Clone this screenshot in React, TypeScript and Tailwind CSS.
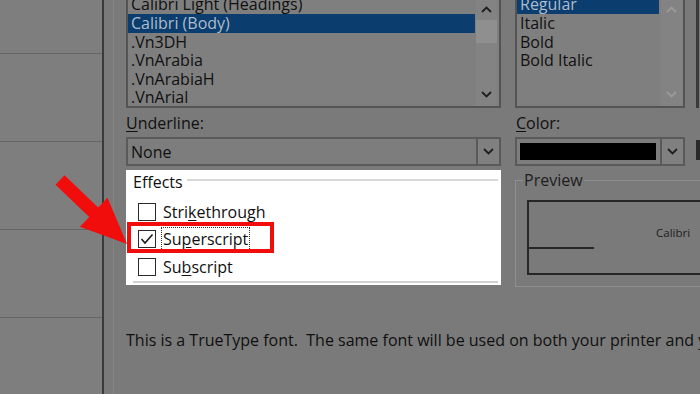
import React from 'react';

const font = { fontFamily: '"Open Sans", "Noto Sans", sans-serif' };

const Chevron = ({ up = false, color = '#1e1e1e' }: { up?: boolean; color?: string }) => (
  <svg width="11" height="7" viewBox="0 0 11 7" fill="none">
    <polyline
      points={up ? '1,6 5.5,1.5 10,6' : '1,1 5.5,5.5 10,1'}
      stroke={color}
      strokeWidth="1.8"
      fill="none"
    />
  </svg>
);

const Scrollbar = ({ disabled = false }: { disabled?: boolean }) => (
  <div className="w-[21px] flex flex-col bg-[#838383]">
    <div className="h-[18px] flex items-center justify-center">
      <Chevron up color={disabled ? '#9a9a9a' : '#1e1e1e'} />
    </div>
    {!disabled && <div className="mt-[2px] h-[23px] bg-[#8f8f8f]" />}
    <div className="flex-1" />
    <div className="h-[20px] pb-[4px] flex items-center justify-center">
      <Chevron color={disabled ? '#9a9a9a' : '#1e1e1e'} />
    </div>
  </div>
);

const ListItem = ({ label, selected = false }: { label: string; selected?: boolean }) => (
  <div
    className={`h-[18.6px] leading-[18.6px] pl-[3px] text-[16px] whitespace-nowrap ${
      selected ? 'bg-[#0b3d6f] text-[#aebccb]' : 'text-[#101010]'
    }`}
  >
    {label}
  </div>
);

const Checkbox = ({ checked = false }: { checked?: boolean }) => (
  <div className="w-[18px] h-[18px] border-[1.5px] border-[#2a2a2a] bg-white flex items-center justify-center shrink-0">
    {checked && (
      <svg width="14" height="12" viewBox="0 0 14 12" fill="none">
        <polyline points="1.5,6 5,10 12.5,1.5" stroke="#1a1a1a" strokeWidth="1.6" fill="none" />
      </svg>
    )}
  </div>
);

const DropButton = () => (
  <div className="w-[23px] h-full border-l-2 border-[#5a5a5a] bg-[#808080] flex items-center justify-center">
    <Chevron />
  </div>
);

export default function App() {
  return (
    <div className="w-[700px] h-[394px] relative overflow-hidden flex bg-[#7a7a7a]" style={font}>
      {/* left side panel */}
      <div className="w-[102px] shrink-0 flex flex-col bg-[#7e7e7e]">
        <div className="h-[54px] border-b border-[#646464]" />
        <div className="h-[88px] border-b border-[#646464]" />
        <div className="h-[88px] border-b border-[#646464]" />
        <div className="h-[88px] border-b border-[#646464]" />
      </div>
      <div className="w-[2px] shrink-0 bg-[#3b3b3b]" />
      <div className="w-[9px] shrink-0" />
      <div className="w-px shrink-0 bg-[#858585]" />

      {/* dialog content */}
      <div className="flex-1 pl-[12px] flex flex-col min-w-0 font-medium">
        {/* lists */}
        <div className="h-[108px] flex shrink-0">
          <div className="w-[375px] shrink-0 border-x-2 border-b-2 border-[#545454] bg-[#7f7f7f] flex">
            <div className="flex-1 overflow-hidden">
              <div className="mt-[-4.6px]">
                <ListItem label="Calibri Light (Headings)" />
                <ListItem label="Calibri (Body)" selected />
                <ListItem label=".Vn3DH" />
                <ListItem label=".VnArabia" />
                <ListItem label=".VnArabiaH" />
                <ListItem label=".VnArial" />
              </div>
            </div>
            <div className="w-px" />
            <Scrollbar />
            <div className="w-[2px]" />
          </div>
          <div className="w-[170px] ml-[14px] shrink-0 border-x-2 border-b-2 border-[#545454] bg-[#7f7f7f] flex">
            <div className="flex-1 overflow-hidden">
              <div className="mt-[-4.6px]">
                <ListItem label="Regular" selected />
                <ListItem label="Italic" />
                <ListItem label="Bold" />
                <ListItem label="Bold Italic" />
              </div>
            </div>
            <div className="w-[2px]" />
            <Scrollbar disabled />
            <div className="w-px" />
          </div>
          <div className="ml-[11px] w-[4px] shrink-0 border-l-[3px] border-[#3a3a3a]" />
        </div>

        {/* labels */}
        <div className="h-[29px] flex items-center text-[16px] text-[#101010] shrink-0">
          <div className="w-[375px] shrink-0">
            <span className="underline underline-offset-2">U</span>nderline:
          </div>
          <div className="ml-[14px] pl-[1px]">
            <span className="underline underline-offset-2">C</span>olor:
          </div>
        </div>

        {/* dropdowns */}
        <div className="h-[29px] flex shrink-0">
          <div className="w-[375px] shrink-0 border-2 border-[#5a5a5a] bg-[#7d7d7d] flex">
            <div className="flex-1 pl-[3px] flex items-center text-[16px] text-[#101010]">None</div>
            <DropButton />
          </div>
          <div className="w-[170px] shrink-0 ml-[14px] border-2 border-[#5a5a5a] bg-[#7d7d7d] flex">
            <div className="flex-1 pl-[3px] pr-[4px] py-[4px]">
              <div className="h-full bg-black" />
            </div>
            <DropButton />
          </div>
          <div className="ml-[11px] mt-[3px] h-[20px] w-[4px] shrink-0 bg-[#2a2a2a]" />
        </div>

        {/* effects + preview */}
        <div className="flex shrink-0 mt-[4px]">
          <div className="w-[375px] h-[115px] shrink-0 bg-white flex flex-col pl-[7px] pr-[3px]">
            <div className="flex items-start h-[24px]">
              <span className="text-[16px] text-[#101010] leading-[24px] pr-[4px]">Effects</span>
              <div className="flex-1 h-[2px] mt-[9px] bg-[#d6d6d6]" />
            </div>
            <div className="flex flex-col pl-[5px] pt-[4px] text-[16px] text-[#101010]">
              <div className="h-[27.5px] flex items-center gap-[7px]">
                <Checkbox />
                <span>
                  Stri<span className="underline underline-offset-2">k</span>ethrough
                </span>
              </div>
              <div className="h-[27.5px] flex items-center gap-[5px]">
                <Checkbox checked />
                <span className="border border-dotted border-[#333] px-[1px] leading-[22px]">
                  Su<span className="underline underline-offset-2">p</span>erscript
                </span>
              </div>
              <div className="h-[27.5px] flex items-center gap-[7px]">
                <Checkbox />
                <span>
                  Su<span className="underline underline-offset-2">b</span>script
                </span>
              </div>
            </div>
            <div className="flex-1" />
            <div className="h-[2px] mb-[2px] bg-[#d0d0d0]" />
          </div>

          <div className="ml-[14px] mt-[10px] w-[220px] h-[107px] shrink-0 border border-[#8f8f8f] flex flex-col">
            <div className="h-0 relative">
              <span className="absolute left-[7px] top-[-12px] px-[1px] bg-[#7a7a7a] text-[16px] leading-[22px] text-[#1e1e1e]">
                Preview
              </span>
            </div>
            <div className="ml-[11px] mt-[19px] h-[75px] border-2 border-r-0 border-[#262626] flex flex-col">
              <div className="h-[28px] flex items-center">
                <div className="w-[127px] shrink-0" />
                <span className="text-[11.5px] text-[#1e1e1e] mt-[34px]">Calibri</span>
              </div>
              <div className="mt-[17px] w-[65px] h-[2px] bg-[#262626]" />
            </div>
          </div>
        </div>

        {/* footer */}
        <div className="mt-[41px] text-[16px] text-[#101010] whitespace-pre overflow-hidden">
          {'This is a TrueType font.  The same font will be used on both your printer and your screen.'}
        </div>
      </div>

      {/* annotation overlays */}
      <div className="absolute left-[127px] top-[222px] w-[147px] h-[31px] border-4 border-[#f20d0d]" />
      <svg className="absolute left-0 top-0" width="700" height="394" viewBox="0 0 700 394">
        <polygon
          points="64.5,175.3 98.2,207.5 107.5,197.7 127,244 79.9,226.7 89.2,216.9 55.5,184.7"
          fill="#f20d0d"
        />
      </svg>
    </div>
  );
}
